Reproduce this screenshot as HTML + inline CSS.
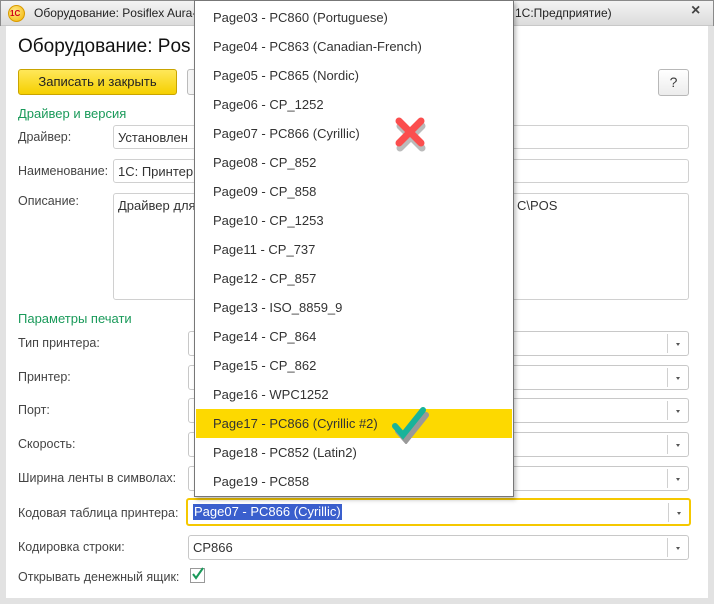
<!DOCTYPE html>
<html><head><meta charset="utf-8"><style>
*{box-sizing:border-box;margin:0;padding:0}
body{width:714px;height:604px;overflow:hidden;background:#fff;font-family:"Liberation Sans",sans-serif;font-size:12.5px;color:#3a3a3a;position:relative}
.a{position:absolute}
.win{left:0;top:0;width:714px;height:604px;border:1px solid #8a8a8a;background:#fff}
.title{left:1px;top:1px;width:712px;height:25px;background:linear-gradient(#f4f4f4,#dcdcdc);border-bottom:1px solid #c8c8c8;font-size:12px;color:#222}
.fr{border:5px solid #e2e2e2;border-top:none;left:0;top:26px;width:714px;height:578px;border-left-width:6px;border-right-width:6px;border-bottom-width:6px}
.lbl{font-size:12.5px;color:#444}
.grn{color:#1a9a5a;font-size:13px}
.in{border:1px solid #d0d0d0;border-radius:3px;background:#fff;height:24px;padding:4px 4px;font-size:13px;color:#333}
.cb{border:1px solid #c8c8c8;border-radius:3px;background:#fff;height:25px}
.cb .arr{position:absolute;right:0;top:2px;width:21px;height:19px;border-left:1px solid #d0d0d0}
.cb .arr:after{content:"";position:absolute;left:8px;top:9px;border:2.5px solid transparent;border-top:3px solid #555}
.pop{left:194px;top:0;width:320px;height:497px;border:1px solid #777;background:#fff;box-shadow:2px 3px 4px rgba(0,0,0,.25)}
.it{position:absolute;left:1px;width:316px;height:29px;line-height:29px;padding-left:17px;font-size:13px;color:#333}
</style></head><body>
<div class="a win"></div>
<div class="a fr"></div>
<div class="a title">
 <div class="a" style="left:7px;top:4px;width:17px;height:17px;border-radius:50%;background:radial-gradient(circle at 40% 35%,#ffe98a,#f2b400);border:1px solid #d99a00"><span style="position:absolute;left:1px;top:3px;font-size:8px;font-weight:bold;color:#d0001a">1C</span></div>
 <div class="a" style="left:33px;top:5px;white-space:nowrap">Оборудование: Posiflex Aura-690</div>
 <div class="a" style="left:514px;top:5px">1С:Предприятие)</div>
 <div class="a" style="left:690px;top:1px;font-size:16px;font-weight:bold;color:#444">×</div>
</div>
<div class="a" style="left:18px;top:36px;font-size:19px;color:#111">Оборудование: Pos</div>
<div class="a" style="left:18px;top:69px;width:159px;height:26px;border:1px solid #c9a400;border-radius:3px;background:linear-gradient(#ffe85a,#f5d000);font-size:13px;color:#222;text-align:center;line-height:24px">Записать и закрыть</div>
<div class="a" style="left:187px;top:69px;width:20px;height:26px;border:1px solid #bbb;border-radius:3px;background:#f5f5f5"></div>
<div class="a" style="left:658px;top:69px;width:31px;height:27px;border:1px solid #b8b8b8;border-radius:3px;background:linear-gradient(#fff,#ececec);text-align:center;line-height:25px;font-size:14px">?</div>
<div class="a grn" style="left:18px;top:106px">Драйвер и версия</div>
<div class="a lbl" style="left:18px;top:130px">Драйвер:</div>
<div class="a lbl" style="left:18px;top:164px">Наименование:</div>
<div class="a lbl" style="left:18px;top:194px">Описание:</div>
<div class="a in" style="left:113px;top:125px;width:576px">Установлен</div>
<div class="a in" style="left:113px;top:159px;width:576px">1С: Принтер</div>
<div class="a in" style="left:113px;top:193px;width:576px;height:107px">Драйвер для<span style="position:absolute;left:403px;top:4px">C\POS</span></div>
<div class="a grn" style="left:18px;top:311px">Параметры печати</div>
<div class="a lbl" style="left:18px;top:336px">Тип принтера:</div>
<div class="a lbl" style="left:18px;top:370px">Принтер:</div>
<div class="a lbl" style="left:18px;top:403px">Порт:</div>
<div class="a lbl" style="left:18px;top:437px">Скорость:</div>
<div class="a lbl" style="left:18px;top:471px">Ширина ленты в символах:</div>
<div class="a lbl" style="left:18px;top:506px">Кодовая таблица принтера:</div>
<div class="a lbl" style="left:18px;top:540px">Кодировка строки:</div>
<div class="a lbl" style="left:18px;top:570px">Открывать денежный ящик:</div>
<div class="a cb" style="left:188px;top:331px;width:501px"><div class="arr"></div></div>
<div class="a cb" style="left:188px;top:365px;width:501px"><div class="arr"></div></div>
<div class="a cb" style="left:188px;top:398px;width:501px"><div class="arr"></div></div>
<div class="a cb" style="left:188px;top:432px;width:501px"><div class="arr"></div></div>
<div class="a cb" style="left:188px;top:466px;width:501px"><div class="arr"></div></div>
<div class="a cb" style="left:186px;top:498px;width:505px;height:28px;border:2px solid #f5c800"><div class="arr" style="top:3px"></div><span style="position:absolute;left:5px;top:4px;background:#3a5fcd;color:#fff;font-size:13px;line-height:16px;padding:0 1px">Page07 - PC866 (Cyrillic)</span></div>
<div class="a cb" style="left:188px;top:535px;width:501px"><div class="arr"></div><span style="position:absolute;left:4px;top:4px;font-size:13px;color:#333">CP866</span></div>
<div class="a" style="left:190px;top:568px;width:15px;height:15px;border:1px solid #999;background:#fff"><svg width="15" height="15" style="position:absolute;left:-1px;top:-3px"><path d="M3 8 L6 12 L13 2" stroke="#1a9a5a" stroke-width="2" fill="none"/></svg></div>
<div class="a pop">
 <div class="it" style="top:2px">Page03 - PC860 (Portuguese)</div>
 <div class="it" style="top:31px">Page04 - PC863 (Canadian-French)</div>
 <div class="it" style="top:60px">Page05 - PC865 (Nordic)</div>
 <div class="it" style="top:89px">Page06 - CP_1252</div>
 <div class="it" style="top:118px">Page07 - PC866 (Cyrillic)</div>
 <div class="it" style="top:147px">Page08 - CP_852</div>
 <div class="it" style="top:176px">Page09 - CP_858</div>
 <div class="it" style="top:205px">Page10 - CP_1253</div>
 <div class="it" style="top:234px">Page11 - CP_737</div>
 <div class="it" style="top:263px">Page12 - CP_857</div>
 <div class="it" style="top:292px">Page13 - ISO_8859_9</div>
 <div class="it" style="top:321px">Page14 - CP_864</div>
 <div class="it" style="top:350px">Page15 - CP_862</div>
 <div class="it" style="top:379px">Page16 - WPC1252</div>
 <div class="it" style="top:408px;background:#fdd900">Page17 - PC866 (Cyrillic #2)</div>
 <div class="it" style="top:437px">Page18 - PC852 (Latin2)</div>
 <div class="it" style="top:466px">Page19 - PC858</div>
</div>
<svg class="a" style="left:392px;top:114px" width="40" height="40"><g stroke-linecap="round" stroke-width="7"><path d="M7 9 L29 31 M29 9 L7 31" stroke="#bbb" transform="translate(1,3)"/><path d="M7 7 L29 29 M29 7 L7 29" stroke="#fb4e4e"/></g></svg>
<svg class="a" style="left:385px;top:402px" width="50" height="42"><path d="M12 26 L20 35 L40 10" stroke="#999" stroke-width="6" fill="none" stroke-linecap="round" transform="translate(1,3)"/><path d="M10 24 L18 33 L38 8" stroke="#18b39a" stroke-width="6" fill="none" stroke-linecap="round"/></svg>
</body></html>
